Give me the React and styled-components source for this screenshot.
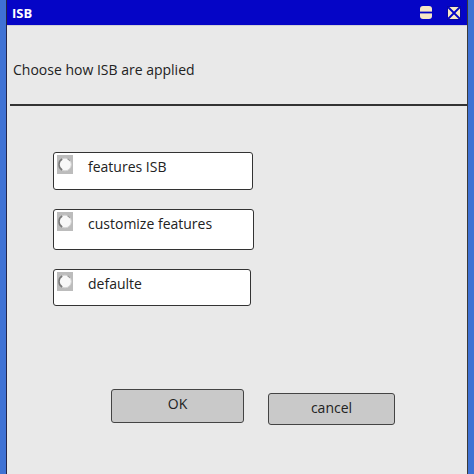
import React from "react";
import styled, { createGlobalStyle } from "styled-components";

const GlobalStyle = createGlobalStyle`
  html, body {
    margin: 0;
    padding: 0;
    background: #3f72d4;
  }
`;

const Frame = styled.div`
  width: 474px;
  height: 474px;
  box-sizing: border-box;
  background: #3f72d4;
  padding: 0 6px 0 6px;
  display: flex;
  font-family: "Open Sans", "Liberation Sans", sans-serif;
`;

const Window = styled.div`
  flex: 1;
  display: flex;
  flex-direction: column;
  background: #e9e9e9;
  border-left: 1px solid #23264a;
  border-right: 1px solid #3a3a3a;
`;

const TitleBar = styled.div`
  height: 25px;
  background: #0505c6;
  border-bottom: 1px solid #d0d0d8;
  display: flex;
  align-items: center;
  padding: 0 6px 0 5px;
`;

const Title = styled.span`
  flex: 1;
  color: #ffffff;
  font-weight: 700;
  font-size: 13px;
`;

const Controls = styled.div`
  display: flex;
  align-items: center;
  gap: 15px;
`;

const Prompt = styled.div`
  padding: 34px 0 0 6px;
  height: 44px;
  font-size: 14px;
  color: #222222;
`;

const Divider = styled.div`
  margin: 0 0 0 3px;
  height: 2px;
  background: #333333;
`;

const Options = styled.div`
  display: flex;
  flex-direction: column;
  gap: 19px;
  padding: 46px 0 0 46px;
`;

const OptionBox = styled.div`
  width: ${(p) => p.$w}px;
  height: ${(p) => p.$h}px;
  box-sizing: border-box;
  background: #ffffff;
  border: 1.5px solid #333333;
  border-radius: 3px;
  display: flex;
  align-items: flex-start;
  padding: 2px 0 0 3px;
  gap: 15px;
`;

const OptionLabel = styled.span`
  font-size: 14px;
  color: #222222;
  line-height: 22px;
  padding-top: 1px;
`;

const ButtonRow = styled.div`
  margin-top: auto;
  margin-bottom: 49px;
  display: flex;
  align-items: flex-start;
  padding-left: 104px;
  gap: 24px;
`;

const Button = styled.div`
  width: ${(p) => p.$w}px;
  height: ${(p) => p.$h}px;
  margin-top: ${(p) => p.$top || 0}px;
  box-sizing: border-box;
  background: #c9c9c9;
  border: 1.5px solid #444444;
  border-radius: 3px;
  display: flex;
  justify-content: center;
  align-items: center;
  padding-bottom: ${(p) => p.$pb || 0}px;
  font-size: 14px;
  color: #222222;
`;

const MinIcon = () => (
  <svg width="12" height="13" viewBox="0 0 12 13">
    <rect x="0" y="0" width="12" height="13" rx="3" fill="#f7e8c6" />
    <rect x="0" y="5.6" width="12" height="1.8" fill="#0505c6" />
  </svg>
);

const CloseIcon = () => (
  <svg width="14" height="14" viewBox="0 0 14 14">
    <rect x="0.5" y="0.5" width="13" height="13" fill="#f7e8c6" stroke="#0a0a9a" />
    <path d="M1 1 L13 13 M13 1 L1 13" stroke="#0505c6" strokeWidth="1.8" />
  </svg>
);

const RadioIcon = () => (
  <svg width="16" height="19" viewBox="0 0 16 19">
    <rect x="0" y="0" width="16" height="19" fill="#bcbcbc" />
    <circle cx="8" cy="9.5" r="6.3" fill="#f8f8f8" stroke="#d4d4d4" strokeWidth="1" />
    <path d="M5.2 4 A6.3 6.3 0 0 0 5.2 15" stroke="#7a7a7a" strokeWidth="1.6" fill="none" />
    <path d="M10.5 3.8 A6.3 6.3 0 0 1 12.8 6" stroke="#9a9a9a" strokeWidth="1.2" fill="none" />
  </svg>
);

const options = [
  { label: "features ISB", w: 200, h: 38 },
  { label: "customize features", w: 201, h: 41 },
  { label: "defaulte", w: 198, h: 37 },
];

export default function App() {
  return (
    <>
      <GlobalStyle />
      <Frame>
        <Window>
          <TitleBar>
            <Title>ISB</Title>
            <Controls>
              <MinIcon />
              <CloseIcon />
            </Controls>
          </TitleBar>
          <Prompt>Choose how ISB are applied</Prompt>
          <Divider />
          <Options>
            {options.map((o) => (
              <OptionBox key={o.label} $w={o.w} $h={o.h}>
                <RadioIcon />
                <OptionLabel>{o.label}</OptionLabel>
              </OptionBox>
            ))}
          </Options>
          <ButtonRow>
            <Button $w={133} $h={34} $pb={5}>OK</Button>
            <Button $w={127} $h={32} $top={4} $pb={3}>cancel</Button>
          </ButtonRow>
        </Window>
      </Frame>
    </>
  );
}
